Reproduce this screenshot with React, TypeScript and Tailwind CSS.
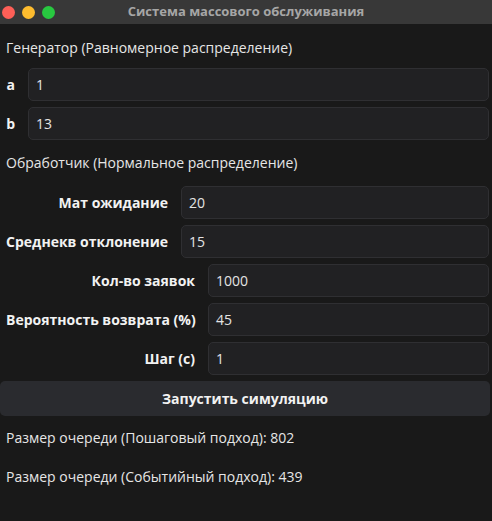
import React from "react";

const font = { fontFamily: '"Open Sans", "Noto Sans", sans-serif' };

function Field({ value }: { value: string }) {
  return (
    <div className="flex-1 h-[33px] rounded-[5px] border border-[#2f2f32] bg-[#212123] flex items-center pl-[7px] text-[14px] text-[#e4e4e4]">
      {value}
    </div>
  );
}

function Row({ label, value, w }: { label: string; value: string; w: string }) {
  return (
    <div className="flex items-center gap-[13px]">
      <div className={`${w} text-right font-bold text-[14px] text-[#f2f2f2] whitespace-nowrap`}>{label}</div>
      <Field value={value} />
    </div>
  );
}

export default function App() {
  return (
    <div className="w-[492px] h-[521px] bg-[#191919] overflow-hidden" style={font}>
      <div className="h-[24px] bg-[#383838] flex items-center relative">
        <div className="flex gap-[7px] pl-[2px]">
          <span className="w-[13px] h-[13px] rounded-full bg-[#fe5f57]" />
          <span className="w-[13px] h-[13px] rounded-full bg-[#febc2e]" />
          <span className="w-[13px] h-[13px] rounded-full bg-[#28c840]" />
        </div>
        <div className="absolute inset-0 flex items-center justify-center text-[13px] font-bold text-[#a6a6a6]">
          Система массового обслуживания
        </div>
      </div>
      <div className="flex flex-col pt-[14px] pl-[6px] pr-[3px] text-[14px] leading-[20px] text-[#e6e6e6]">
        <div className="h-[20px]">Генератор (Равномерное распределение)</div>
        <div className="mt-[10px] flex flex-col gap-[6px]">
          <Row label="a" value="1" w="w-[9px]" />
          <Row label="b" value="13" w="w-[9px]" />
        </div>
        <div className="mt-[13px] h-[20px]">Обработчик (Нормальное распределение)</div>
        <div className="mt-[13px] flex flex-col gap-[6px]">
          <Row label="Мат ожидание" value="20" w="w-[162px]" />
          <Row label="Среднекв отклонение" value="15" w="w-[162px]" />
          <Row label="Кол-во заявок" value="1000" w="w-[189px]" />
          <Row label="Вероятность возврата (%)" value="45" w="w-[189px]" />
          <Row label="Шаг (с)" value="1" w="w-[189px]" />
        </div>
      </div>
      <div className="mt-[6px] pr-[2px]">
        <div className="h-[35px] rounded-[5px] bg-[#2a2b2f] flex items-center justify-center font-bold text-[14px] text-[#f2f2f2]">
          Запустить симуляцию
        </div>
      </div>
      <div className="pl-[6px] pt-[12px] flex flex-col gap-[19px] text-[14px] leading-[20px] text-[#e6e6e6]">
        <div>Размер очереди (Пошаговый подход): 802</div>
        <div>Размер очереди (Событийный подход): 439</div>
      </div>
    </div>
  );
}
